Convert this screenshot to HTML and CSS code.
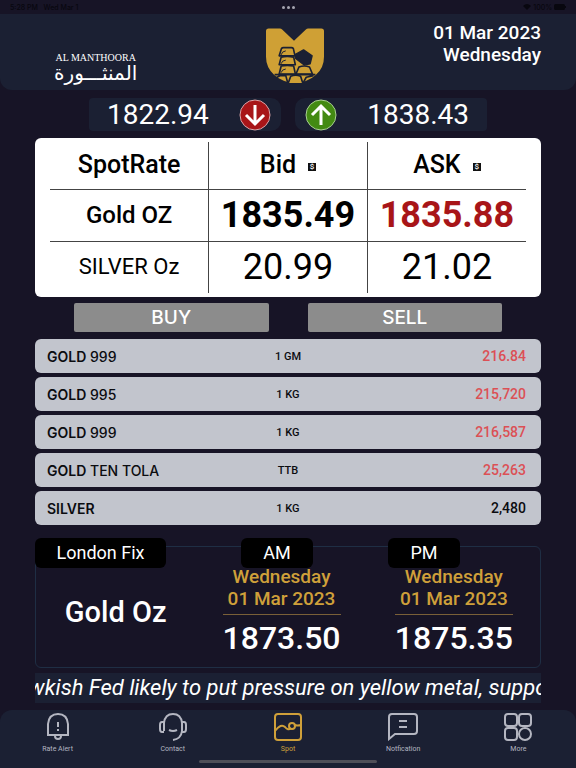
FILE: index.html
```html
<!DOCTYPE html>
<html lang="en">
<head>
<meta charset="utf-8">
<meta name="viewport" content="width=device-width, initial-scale=1">
<title>Al Manthoora – Spot Rate</title>
<link rel="stylesheet" href="styles.css">
</head>
<body>
<div class="status">
  <span class="status-time">5:28 PM&nbsp;&nbsp; Wed Mar 1</span>
  <span class="dots"><i></i><i></i><i></i></span>
  <span class="status-right">
    <svg width="8" height="6" viewBox="0 0 16 12"><path d="M0 4Q8-4 16 4L8 12Z" fill="currentColor"/></svg>
    100%
    <svg width="12" height="6" viewBox="0 0 24 12"><rect width="22" height="12" rx="3" fill="currentColor"/><rect x="22" y="4" width="2" height="4" fill="currentColor"/></svg>
  </span>
</div>
<header class="header">
  <div class="brand">
    <span class="brand-en">AL MANTHOORA</span>
    <span class="brand-ar" lang="ar" dir="rtl">المنثـــورة</span>
  </div>
  <svg class="logo" viewBox="106 38 176 166" aria-hidden="true">
    <path d="M114 39H148Q152 39 155 42L191 76L227 42Q230 39 234 39H274Q282 39 282 47V125Q282 160 257 180Q233 202 194 204Q155 202 131 180Q106 158 106 125V47Q106 39 114 39Z" fill="#cfa035"/>
    <path d="M194 118L220 104L246 122L240 146L222 150L196 130Z" fill="#1b2033" stroke="#1b2033" stroke-width="4" stroke-linejoin="round"/>
    <g fill="#cfa035" stroke="#1b2033" stroke-width="5" stroke-linejoin="round">
      <path d="M146 122L153 100Q155 97 159 97H183Q187 97 189 100L194 122Z"/>
      <path d="M146 149L152 126Q170 122 190 126L195 149Z"/>
      <path d="M146 177L152 153Q170 149 190 153L195 177Z"/>
      <path d="M197 177L206 156Q222 150 238 156L247 177Z"/>
      <path d="M173 206L181 184Q196 178 211 184L218 206"/>
    </g>
    <g fill="none" stroke="#1b2033" stroke-width="5" stroke-linejoin="round">
      <path d="M132 179H256M138 188L150 182H166L172 204M220 202L228 187L250 182"/>
      <path d="M152 119Q154 108 166 107M152 146Q154 136 166 135M152 173Q154 163 166 162" stroke-width="3"/>
    </g>
  </svg>
  <div class="today">01 Mar 2023<br>Wednesday</div>
</header>
<main class="main">
  <div class="range">
    <div class="range-box low">
      <span>1822.94</span>
      <svg width="32" height="32" viewBox="0 0 32 32" aria-label="Low"><circle cx="16" cy="16" r="15" fill="#a81518" stroke="#d9a5aa"/><path d="M16 6V25M7 16L16 25L25 16" fill="none" stroke="#fff" stroke-width="3"/></svg>
    </div>
    <div class="range-box high">
      <svg width="32" height="32" viewBox="0 0 32 32" aria-label="High"><circle cx="16" cy="16" r="15" fill="#438a12" stroke="#a9cf93"/><path d="M16 26V7M7 16L16 7L25 16" fill="none" stroke="#fff" stroke-width="3"/></svg>
      <span>1838.43</span>
    </div>
  </div>

  <div class="card">
    <table class="spot">
      <thead>
        <tr><th>SpotRate</th><th>Bid<span class="cur">$</span></th><th>ASK<span class="cur">$</span></th></tr>
      </thead>
      <tbody>
        <tr class="gold"><th>Gold OZ</th><td>1835.49</td><td class="down">1835.88</td></tr>
        <tr class="silver"><th>SILVER Oz</th><td>20.99</td><td>21.02</td></tr>
      </tbody>
    </table>
  </div>

  <div class="actions">
    <button type="button">BUY</button>
    <button type="button">SELL</button>
  </div>

  <table class="rates">
    <tbody>
      <tr><th><b>GOLD</b> 999</th><td>1 GM</td><td class="price red">216.84</td></tr>
      <tr><th><b>GOLD</b> 995</th><td>1 KG</td><td class="price red">215,720</td></tr>
      <tr><th><b>GOLD</b> 999</th><td>1 KG</td><td class="price red">216,587</td></tr>
      <tr><th><b>GOLD</b> TEN TOLA</th><td>TTB</td><td class="price red">25,263</td></tr>
      <tr><th><b>SILVER</b></th><td>1 KG</td><td class="price">2,480</td></tr>
    </tbody>
  </table>

  <section class="fix">
    <div class="pills"><h2 class="pill wide">London Fix</h2><span class="pill">AM</span><span class="pill">PM</span></div>
    <div class="fix-box">
      <div class="fix-name">Gold Oz</div>
      <div class="fix-col"><div class="fix-date">Wednesday<br>01 Mar 2023</div><div class="fix-price">1873.50</div></div>
      <div class="fix-col"><div class="fix-date">Wednesday<br>01 Mar 2023</div><div class="fix-price">1875.35</div></div>
    </div>
  </section>

  <div class="news"><span>wkish Fed likely to put pressure on yellow metal, suppo</span></div>
</main>
<nav class="nav">
  <div class="tabs">
    <a href="#alert"><svg viewBox="0 0 28 28"><path d="M4 22V11Q5 1 14 1Q23 1 24 11V22M3 22H25M11 23Q11 26 14 26Q17 26 17 23M14 9V14M14 16V18"/></svg>Rate Alert</a>
    <a href="#contact"><svg viewBox="0 0 28 28"><path d="M5 18V10Q6 1 14 1Q22 1 23 10V18Q22 26 14 27M5 9H3Q1 9 1 12V16Q1 19 3 19H5M23 9H25Q27 9 27 12V16Q27 19 25 19H23M10 17Q14 19 18 17"/></svg>Contact</a>
    <a href="#spot" class="active"><svg viewBox="0 0 28 28"><rect x="1" y="1" width="26" height="26" rx="3"/><path d="M1 18Q7 10 11 14Q14 18 17 15M20 12Q24 13 27 12"/><circle cx="18" cy="13" r="3"/></svg>Spot</a>
    <a href="#notification"><svg class="chat" viewBox="0 0 30 28"><path d="M1 26V4Q1 1 4 1H26Q29 1 29 4V18Q29 21 26 21H7ZM11 8H19M11 14H19"/></svg>Notfication</a>
    <a href="#more"><svg viewBox="0 0 28 28"><rect x="1" y="1" width="12" height="12" rx="3"/><rect x="15" y="1" width="12" height="12" rx="3"/><rect x="1" y="15" width="12" height="12" rx="3"/><circle cx="21" cy="21" r="6"/></svg>More</a>
  </div>
  <div class="home"></div>
</nav>
</body>
</html>
```
FILE: styles.css
```css
* { box-sizing: border-box; }

body {
  margin: 0;
  min-height: 100vh;
  display: flex;
  flex-direction: column;
  background: #171426;
  color: #fff;
  font-family: Roboto, "Liberation Sans", sans-serif;
}

.status {
  display: grid;
  grid-template-columns: 1fr auto 1fr;
  align-items: center;
  height: 14px;
  padding: 0 10px;
  color: #08070f;
  font: 500 7px Inter, sans-serif;
}
.status-right { text-align: right; }
.dots { display: flex; gap: 2px; }
.dots i { width: 3px; height: 3px; border-radius: 50%; background: #a6a5b0; }

.header {
  display: grid;
  grid-template-columns: 1fr auto 1fr;
  height: 76px;
  padding: 8px 35px 7px 49px;
  background: #1b2033;
  border-radius: 0 0 12px 12px;
}
.brand {
  display: flex;
  flex-direction: column;
  align-items: center;
  justify-self: start;
  align-self: end;
  margin-left: 5px;
}
.brand-en { font: 10px/10px "Liberation Serif", serif; }
.brand-ar { font: 20px/20px "DejaVu Sans", sans-serif; }
.logo { width: 58px; height: 55px; align-self: end; }
.today { text-align: right; font-size: 19px; line-height: 22px; font-weight: 500; }

.main { padding: 8px 35px 7px; }

.range { display: flex; gap: 14px; padding: 0 54px; }
.range-box {
  flex: 1;
  display: flex;
  align-items: center;
  justify-content: space-between;
  height: 33px;
  background: #1b2033;
  font-size: 28px;
}
.low { padding: 0 10px 0 18px; border-radius: 4px 10px 10px 4px; }
.high { padding: 0 18px 0 10px; border-radius: 10px 4px 4px 10px; }

.card {
  margin-top: 7px;
  padding: 4px 15px;
  background: #fff;
  border-radius: 6px;
  color: #000;
}
.spot { width: 100%; table-layout: fixed; border-collapse: collapse; text-align: center; }
.spot th, .spot td { height: 47px; padding: 0; font-size: 24px; font-weight: 500; line-height: 36px; }
.spot thead th { font-size: 25px; }
.spot tr > * + * { border-left: 1px solid #444; }
.spot tbody tr > * { height: 52px; border-top: 1px solid #444; }
.spot .gold td { font-size: 36px; font-weight: 700; }
.spot .gold .down { color: #a81518; }
.spot .silver th { font-size: 22px; font-weight: 400; }
.spot .silver td { font-size: 36px; font-weight: 400; }
.cur {
  display: inline-block;
  width: 8px;
  height: 8px;
  margin-left: 12px;
  vertical-align: 4px;
  background: #111;
  color: #fff;
  font-size: 8px;
  line-height: 8px;
}

.actions { display: flex; gap: 39px; padding: 6px 39px 3px; }
.actions button {
  flex: 1;
  height: 29px;
  padding: 0;
  border: 0;
  border-radius: 2px;
  background: #8c8c8c;
  color: #fff;
  font: 500 19px Inter, sans-serif;
}

.rates { width: 100%; table-layout: fixed; border-spacing: 0 4px; color: #0b0c10; }
.rates th, .rates td { height: 34px; padding: 0; background: #c2c5cd; font-weight: 500; }
.rates th { padding-left: 12px; text-align: left; font: 500 14px Inter, sans-serif; border-radius: 6px 0 0 6px; }
.rates b { font-weight: 600; }
.rates td { text-align: center; font-size: 11px; }
.rates .price { padding-right: 15px; text-align: right; font-size: 14px; border-radius: 0 6px 6px 0; }
.rates .red { color: #dc5055; }

.fix { margin-top: 9px; }
.pills { position: relative; z-index: 1; display: flex; gap: 75px; margin-bottom: -22px; }
.pill {
  width: 72px;
  height: 30px;
  margin: 0;
  border-radius: 6px;
  background: #000;
  text-align: center;
  font-size: 18px;
  font-weight: 400;
  line-height: 30px;
}
.wide { width: 131px; }
.fix-box {
  display: grid;
  grid-template-columns: 160fr 173fr 173fr;
  height: 122px;
  padding-top: 19px;
  border: 1px solid #1f2e44;
  border-radius: 6px;
}
.fix-name { padding-top: 26px; text-align: center; font-size: 29px; line-height: 40px; font-weight: 500; }
.fix-col { justify-self: center; text-align: center; }
.fix-date { padding-bottom: 4px; border-bottom: 1px solid #7a6038; color: #cfa03a; font-size: 19px; line-height: 22px; font-weight: 500; }
.fix-price { font-size: 32px; line-height: 46px; font-weight: 500; }

.news {
  display: flex;
  justify-content: center;
  margin-top: 5px;
  overflow: hidden;
  background: #1b2033;
  white-space: nowrap;
  font-size: 22px;
  font-style: italic;
  line-height: 30px;
}

.nav { margin-top: auto; background: #1b2033; border-radius: 12px 12px 0 0; }
.tabs { display: grid; grid-template-columns: repeat(5, 1fr); padding-top: 3px; }
.tabs a {
  display: flex;
  flex-direction: column;
  align-items: center;
  color: #b4b6c1;
  font-size: 7px;
  line-height: 16px;
  text-decoration: none;
}
.tabs svg { width: 28px; height: 28px; fill: none; stroke: currentColor; stroke-width: 2; }
.tabs .chat { width: 30px; }
.tabs .active { color: #cfa03a; }
.home { width: 31%; height: 3px; margin: 3px auto 5px; border-radius: 2px; background: #4f4f58; }
```
